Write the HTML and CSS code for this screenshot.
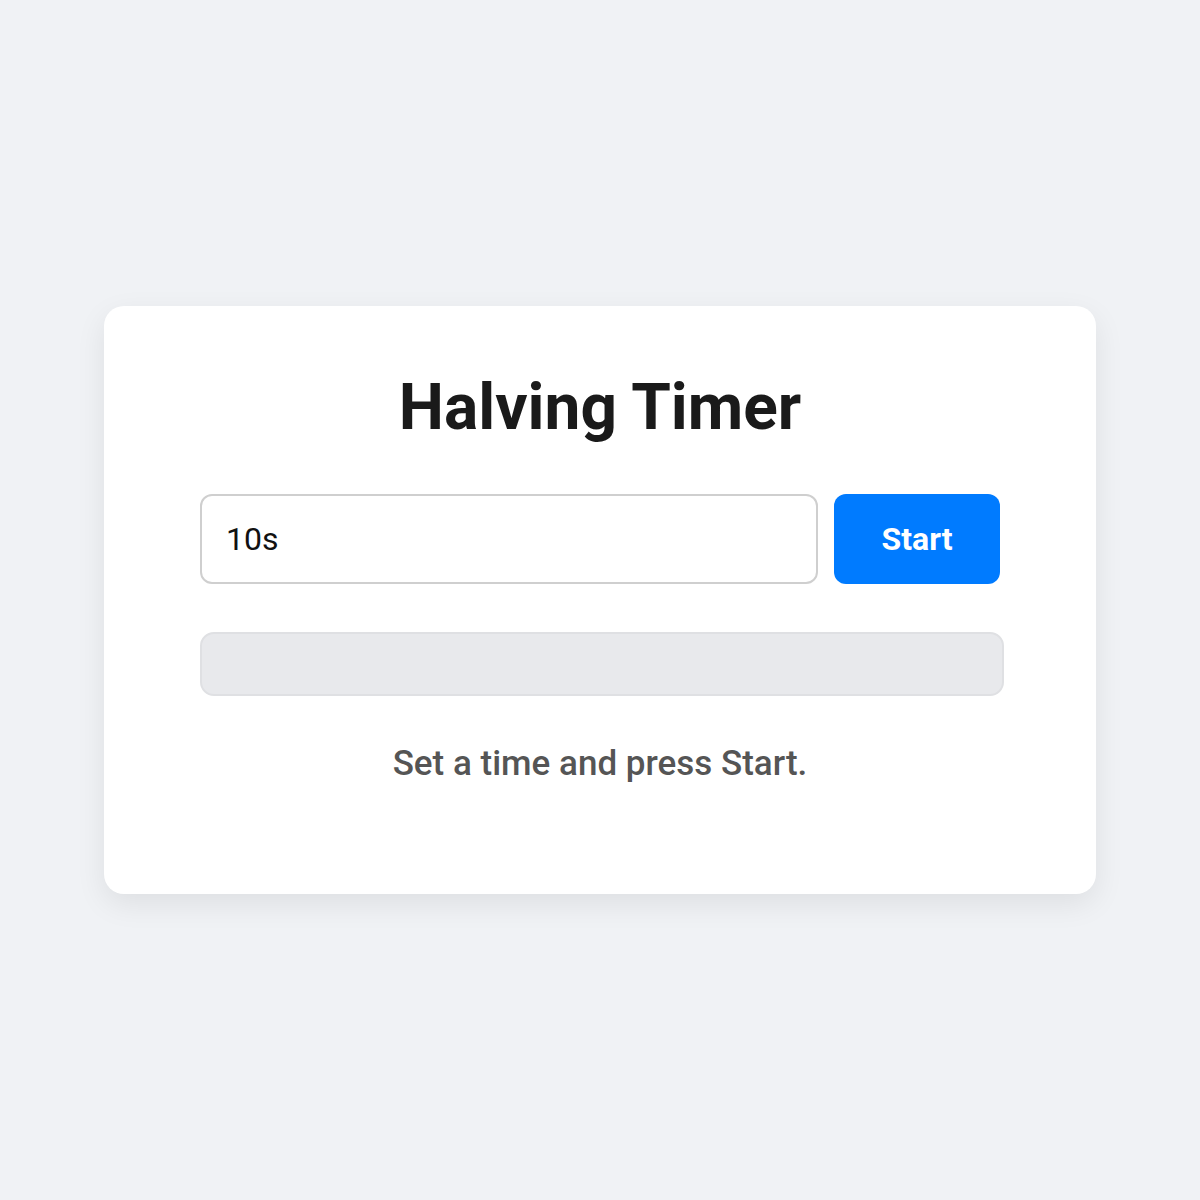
FILE: index.html
```html
<!DOCTYPE html>
<html lang="en">
<head>
    <meta charset="utf-8">
    <meta name="viewport" content="width=device-width, initial-scale=1.0">
    <title>Halving Timer</title>
    <link rel="stylesheet" href="styles.css">
</head>
<body>
    <div class="card">
        <h1>Halving Timer</h1>
        <div class="controls">
            <input type="text" id="timeInput" value="10s">
            <button id="startBtn">Start</button>
        </div>
        <div class="progress">
            <div class="progress-fill" id="fill"></div>
        </div>
        <p class="status" id="status">Set a time and press Start.</p>
    </div>
</body>
</html>
```

FILE: styles.css
```css
body {
    font-family: Roboto, "Liberation Sans", sans-serif;
    margin: 0;
    padding: 0;
    display: flex;
    justify-content: center;
    align-items: center;
    min-height: 100vh;
    background-color: #f0f2f5;
}
.card {
    box-sizing: border-box;
    width: 992px;
    background-color: #ffffff;
    border-radius: 20px;
    box-shadow: 0 10px 30px rgba(0, 0, 0, 0.08);
    padding: 64px 96px 110px;
    text-align: center;
}
h1 {
    margin: 0 0 49px;
    font-size: 64px;
    line-height: 75px;
    font-weight: 700;
    color: #1a1a1a;
}
.controls {
    display: flex;
    gap: 16px;
}
.controls input {
    flex: 1;
    box-sizing: border-box;
    height: 90px;
    padding: 0 24px;
    font-family: inherit;
    font-size: 32px;
    color: #111;
    border: 2px solid #cfcfcf;
    border-radius: 12px;
    outline: none;
}
.controls button {
    width: 166px;
    height: 90px;
    border: none;
    border-radius: 12px;
    background-color: #007bff;
    color: #ffffff;
    font-family: inherit;
    font-size: 32px;
    font-weight: 700;
}
.progress {
    box-sizing: border-box;
    width: 804px;
    height: 64px;
    margin-top: 48px;
    background-color: #e8e9ec;
    border: 2px solid #dfe0e3;
    border-radius: 14px;
    overflow: hidden;
}
.progress-fill {
    width: 0;
    height: 100%;
    background-color: #007bff;
}
.status {
    margin: 48px 0 0;
    font-size: 35px;
    line-height: 40px;
    font-weight: 500;
    color: #555555;
}
```
